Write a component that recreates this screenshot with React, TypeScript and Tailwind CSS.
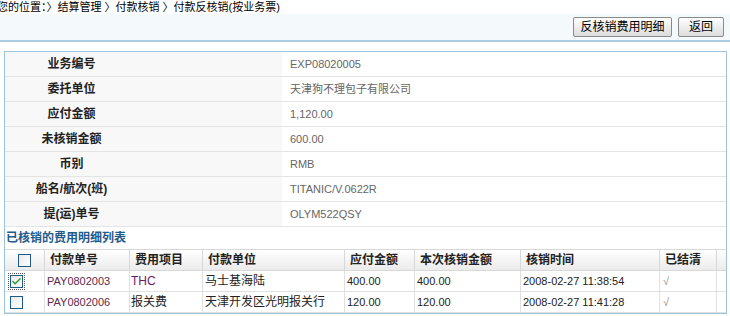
import { Check } from 'lucide-react';

const font = { fontFamily: '"Liberation Sans", "Noto Sans CJK SC", sans-serif' };

const info: [string, string][] = [
  ['业务编号', 'EXP08020005'],
  ['委托单位', '天津狗不理包子有限公司'],
  ['应付金额', '1,120.00'],
  ['未核销金额', '600.00'],
  ['币别', 'RMB'],
  ['船名/航次(班)', 'TITANIC/V.0622R'],
  ['提(运)单号', 'OLYM522QSY'],
];

const cols = ['w-[40px]', 'w-[85px]', 'w-[73px]', 'w-[142px]', 'w-[70px]', 'w-[106px]', 'w-[139px]', 'w-[57px]'];

const rows = [
  { no: 'PAY0802003', item: 'THC', unit: '马士基海陆', due: '400.00', paid: '400.00', time: '2008-02-27 11:38:54', checked: true },
  { no: 'PAY0802006', item: '报关费', unit: '天津开发区光明报关行', due: '120.00', paid: '120.00', time: '2008-02-27 11:41:28', checked: false },
];

function Box({ checked, focus }: { checked?: boolean; focus?: boolean }) {
  return (
    <span className={focus ? 'inline-flex border border-dotted border-[#555] p-[1px]' : 'inline-flex p-[2px]'}>
      <span className="flex h-[13px] w-[13px] items-center justify-center border border-[#1c5a8a] bg-gradient-to-br from-[#e8e8e8] to-white">
        {checked && <Check size={11} strokeWidth={3} className="text-[#2a9a2a]" />}
      </span>
    </span>
  );
}

export default function App() {
  return (
    <div className="h-[316px] w-[730px] overflow-hidden bg-white text-[12px] text-[#222]" style={font}>
      <div className="-ml-[3px] h-[14px] text-[11px] leading-[14px] text-black">
        您的位置：〉结算管理 〉付款核销 〉付款反核销(按业务票)
      </div>

      <div className="flex h-[28px] items-start justify-end gap-[6px] border-b-2 border-[#a9cce3] bg-[#f4f9fc] pr-[6px] pt-[3px]">
        <button className="h-[20px] w-[99px] rounded-[2px] border border-[#8a8a8a] bg-gradient-to-b from-white to-[#dcdcdc] text-[12px] text-black">
          反核销费用明细
        </button>
        <button className="h-[20px] w-[46px] rounded-[2px] border border-[#8a8a8a] bg-gradient-to-b from-white to-[#dcdcdc] text-[12px] text-black">
          返回
        </button>
      </div>

      <div className="ml-[4px] mt-[9px] w-[723px] border border-[#9dc3dd]">
        {info.map(([label, value]) => (
          <div key={label} className="flex h-[25px] items-center border-b border-[#e4e4e4]">
            <div className="flex h-full w-[277px] items-center bg-[#f8f8f8]">
              <span className="w-[133px] text-center font-bold">{label}</span>
            </div>
            <div className="pl-[8px] text-[11px] text-[#666]">{value}</div>
          </div>
        ))}

        <div className="flex h-[22px] items-center pl-[1px] font-bold text-[#1f5a8c]">已核销的费用明细列表</div>

        <div className="flex h-[22px] items-center border-y border-[#d8d8d8] bg-gradient-to-b from-white to-[#ebebeb] font-bold">
          {['', '付款单号', '费用项目', '付款单位', '应付金额', '本次核销金额', '核销时间', '已结清'].map((h, i) => (
            <div key={i} className={`${cols[i]} flex h-full items-center border-r border-[#d8d8d8] ${i === 0 ? 'justify-center' : 'pl-[5px]'}`}>
              {i === 0 ? <Box /> : h}
            </div>
          ))}
        </div>

        {rows.map((r) => (
          <div key={r.no} className="flex h-[21px] items-center border-b border-[#e0e0e0] text-[11px]">
            <div className={`${cols[0]} flex h-full items-center border-r border-[#e0e0e0] pl-[3px]`}>
              <Box checked={r.checked} focus={r.checked} />
            </div>
            <div className={`${cols[1]} flex h-full items-center border-r border-[#e0e0e0] pl-[2px] text-[#5e2a4e]`}>{r.no}</div>
            <div className={`${cols[2]} flex h-full items-center border-r border-[#e0e0e0] pl-[1px] text-[12px] ${r.item === 'THC' ? 'text-[#6a1a6a]' : ''}`}>{r.item}</div>
            <div className={`${cols[3]} flex h-full items-center border-r border-[#e0e0e0] pl-[2px] text-[12px]`}>{r.unit}</div>
            <div className={`${cols[4]} flex h-full items-center border-r border-[#e0e0e0] pl-[2px]`}>{r.due}</div>
            <div className={`${cols[5]} flex h-full items-center border-r border-[#e0e0e0] pl-[2px]`}>{r.paid}</div>
            <div className={`${cols[6]} flex h-full items-center border-r border-[#e0e0e0] pl-[2px]`}>{r.time}</div>
            <div className={`${cols[7]} flex h-full items-center border-r border-[#e0e0e0] pl-[3px] text-[#888]`}>√</div>
          </div>
        ))}
      </div>
    </div>
  );
}
